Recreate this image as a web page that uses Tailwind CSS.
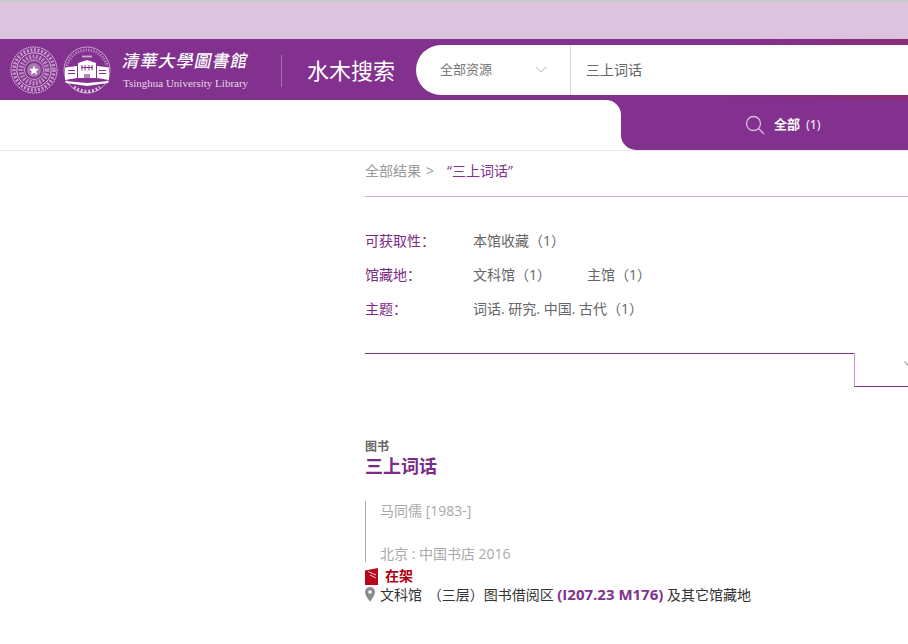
<!DOCTYPE html>
<html lang="zh-CN">
<head>
    <meta charset="UTF-8">
    <title>水木搜索</title>
    <script src="https://cdn.jsdelivr.net/npm/@tailwindcss/browser@4"></script>
</head>
<body class="h-[644px] w-[908px] overflow-hidden bg-white font-['Open_Sans','Noto_Sans_CJK_SC',sans-serif] text-[14px] text-[#666]">
    <!-- Notice band -->
    <div class="h-[39px] border-t-2 border-[#c8c8c8] bg-[#dcc4de]"></div>

    <!-- Header -->
    <header class="flex h-[61px] bg-[linear-gradient(100deg,#82318e_80%,#8c2c78)] pt-[6px]">
        <div class="flex h-[50px] w-[416px] shrink-0 items-start">
            <!-- University seal -->
            <svg class="ml-[10px] mt-[1px] shrink-0" width="48" height="48" viewBox="0 0 48 48" fill="none" stroke="#f0e2f0">
                <circle cx="24" cy="24" r="23" stroke-width="1" stroke-dasharray="1.500 .8"/>
                <circle cx="24" cy="24" r="20" stroke-width="3.500" stroke-dasharray="2 1.600" opacity=".6"/>
                <circle cx="24" cy="24" r="17.200" stroke-width=".8"/>
                <circle cx="24" cy="24" r="13" stroke-width="5" stroke-dasharray="2 1.300" opacity=".5"/>
                <circle cx="24" cy="24" r="9.500" stroke-width=".8" opacity=".8"/>
                <circle cx="24" cy="24" r="7" fill="#a877ae" stroke="none"/>
                <polygon points="24,19.500 25.300,22.800 28.800,23 26.100,25.200 27,28.700 24,26.800 21,28.700 21.900,25.200 19.200,23 22.700,22.800" fill="#fff" stroke="none"/>
            </svg>
            <!-- Library seal -->
            <svg class="ml-[5px] mt-[1px] shrink-0" width="48" height="48" viewBox="0 0 48 48" fill="none" stroke="#f0e2f0">
                <circle cx="24" cy="24" r="23" stroke-width=".8" opacity=".8"/>
                <path d="M4 20A20.500 20.500 0 0 1 44 20" stroke-width="3" stroke-dasharray="1.400 1.200" opacity=".45"/>
                <path d="M11 41A21 21 0 0 0 37 41" stroke-width="3.500" stroke-dasharray="2 1.800" opacity=".75"/>
                <path d="M19 10.500h10" stroke-width="1.800" opacity=".7"/>
                <path d="M2 21.500l12-1.500v12L2 34z" fill="#fff" stroke="none"/>
                <path d="M46 21.500 34 20v12l12 2z" fill="#fff" stroke="none"/>
                <path d="M15 17l9-3 9 3v15H15z" fill="#fff" stroke="none"/>
                <path d="M2 35l22 2 22-2-1 2-21 3-21-3z" fill="#fff" stroke="none"/>
                <path d="M19 19v5.500M22 19v5.500M26 19v5.500M29 19v5.500M18 21.500h12M5 24.500h7M5 27.500h7M36 24.500h7M36 27.500h7" stroke="#82318e" stroke-width="1"/>
                <path d="M21 32v-4h6v4" fill="#b48cbb" stroke="none"/>
            </svg>
            <!-- Library wordmark -->
            <div class="ml-[12px] flex w-[125px] shrink-0 flex-col">
                <span class="mt-[2px] -skew-x-12 whitespace-nowrap font-['Noto_Sans_CJK_TC',sans-serif] text-[17px] font-medium leading-[26px] tracking-[1px] text-white">清華大學圖書館</span>
                <span class="mt-[3px] whitespace-nowrap font-['Liberation_Serif',serif] text-[11px] leading-[14px] text-[#e6d5e8]">Tsinghua University Library</span>
            </div>
            <div class="ml-[33px] mt-[10px] h-[32px] w-px shrink-0 bg-[#a672ae]"></div>
            <h1 class="ml-[25px] whitespace-nowrap text-[22px] leading-[50px] text-white">水木搜索</h1>
        </div>
        <!-- Search box -->
        <div class="flex h-[50px] flex-1 rounded-l-[25px] bg-white">
            <div class="flex w-[155px] items-center border-r border-[#d8d8d8] pb-[1px] pl-[24px]">
                <span class="text-[13px] text-[#777]">全部资源</span>
                <svg class="ml-[43px]" width="12" height="7" viewBox="0 0 12 7" fill="none" stroke="#c9cfd6" stroke-width="1.100"><path d="M.7.7 6 6l5.300-5.300"/></svg>
            </div>
            <div class="flex items-center pb-[1px] pl-[15px] text-[14px] text-[#666]">三上词话</div>
        </div>
    </header>

    <!-- Tab row -->
    <div class="flex h-[51px] border-b border-[#eaeaea] bg-[linear-gradient(#82318e_50%,#fff_50%)]">
        <div class="w-[621px] rounded-tr-[15px] bg-white"></div>
        <div class="flex flex-1 items-center rounded-bl-[15px] bg-[#82318e] pl-[124px] text-white">
            <svg width="20" height="20" viewBox="0 0 20 20" fill="none" stroke="#d7bddb" stroke-width="1.300"><circle cx="8.500" cy="8.500" r="7"/><path d="m13.500 13.500 5.500 5.500"/></svg>
            <span class="ml-[9px] text-[13px] font-semibold">全部</span>
            <span class="ml-[6px] text-[12px] font-semibold text-[#ead9ec]">(1)</span>
        </div>
    </div>

    <main class="ml-[365px]">
        <!-- Breadcrumb -->
        <div class="flex h-[46px] items-center border-b border-[#cfa4d6] pb-[7px] text-[14px]">
            <span class="text-[#999]">全部结果</span>
            <span class="ml-[5px] text-[#999]">&gt;</span>
            <span class="ml-[13px] text-[#82318e]">“三上词话”</span>
        </div>

        <!-- Facets -->
        <dl class="mt-[34px] flex flex-col gap-[14px] leading-[20px]">
            <div class="flex">
                <dt class="w-[108px] text-[#7b2a86]">可获取性：</dt>
                <dd>本馆收藏（1）</dd>
            </div>
            <div class="flex">
                <dt class="w-[108px] text-[#7b2a86]">馆藏地：</dt>
                <dd class="w-[114px]">文科馆（1）</dd>
                <dd>主馆（1）</dd>
            </div>
            <div class="flex">
                <dt class="w-[108px] text-[#7b2a86]">主题：</dt>
                <dd>词话. 研究. 中国. 古代（1）</dd>
            </div>
        </dl>

        <!-- Collapse tab line -->
        <div class="mt-[34px] flex h-[34px]">
            <div class="w-[489px] border-t border-[#82318e]"></div>
            <div class="relative flex-1 border-b border-l border-b-[#82318e] border-l-[#c39acb]">
                <svg class="absolute left-[49px] top-[8px]" width="10" height="7" viewBox="0 0 10 7" fill="none" stroke="#999" stroke-width="1.100"><path d="M.5.500 5 5.500 9.500.5"/></svg>
            </div>
        </div>

        <!-- Result -->
        <article class="mt-[53px]">
            <div class="text-[12px] font-bold leading-[14px] text-[#666]">图书</div>
            <h2 class="mt-[1px] text-[18px] font-bold leading-[22px] text-[#7b2a86]">三上词话</h2>
            <div class="mt-[25px] h-[61px] border-l border-[#aaa] pl-[14px] text-[14px] leading-[20px] text-[#aaa]">
                <div class="-mt-[1px]">马同儒 [1983-]</div>
                <div class="mt-[23px]">北京 : 中国书店 2016</div>
            </div>
            <div class="mt-[5px] flex h-[18px] items-center">
                <svg width="13" height="17" viewBox="0 0 13 17"><path d="M0 2.500 13 0v17H0z" fill="#b8071c"/><path d="M3 3.500 11 7M5 7l6 3" stroke="#f3c9ce" stroke-width="1"/></svg>
                <span class="ml-[7px] text-[14px] font-bold leading-[18px] text-[#b00012]">在架</span>
            </div>
            <div class="flex h-[19px] items-center text-[14px] text-[#333]">
                <svg width="10" height="15" viewBox="0 0 10 15"><path fill-rule="evenodd" d="M5 0a5 5 0 0 1 5 5c0 3.500-3.500 7-5 10C3.500 12 0 8.500 0 5a5 5 0 0 1 5-5Zm0 3.200a1.800 1.800 0 1 0 0 3.600 1.800 1.800 0 0 0 0-3.600Z" fill="#8c8c8c"/></svg>
                <span class="ml-[5px] whitespace-nowrap">文科馆 <span class="ml-[2px]">（三层）图书借阅区</span> <b class="text-[15px] font-bold text-[#82318e]">(I207.23 M176)</b> 及其它馆藏地</span>
            </div>
        </article>
    </main>
</body>
</html>
